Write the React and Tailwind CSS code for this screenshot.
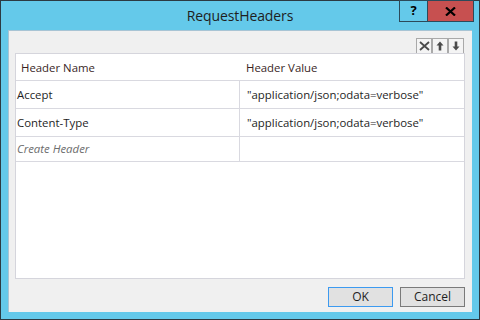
import React from "react";

const rows = [
  { name: "Accept", value: "\"application/json;odata=verbose\"" },
  { name: "Content-Type", value: "\"application/json;odata=verbose\"" },
];

const ToolButton = ({ children }) => (
  <button className="w-[16px] h-[16px] border border-[#a9a9a9] bg-[#f4f4f4] flex items-center justify-center">
    {children}
  </button>
);

export default function App() {
  return (
    <div
      className="w-[480px] h-[320px] bg-[#64c9ea] border border-[#2c3a42] flex flex-col text-[#1e1e1e]"
      style={{ fontFamily: '"Open Sans", "Noto Sans", sans-serif' }}
    >
      {/* title bar */}
      <div className="relative h-[29px] flex items-center justify-center">
        <span className="text-[14px] tracking-[-0.1px]">RequestHeaders</span>
        <div className="absolute -top-px right-[5px] flex">
          <div className="w-[29px] h-[22px] border border-[#2c4a5a] flex items-center justify-center text-[13px] font-bold text-black">
            ?
          </div>
          <div className="w-[47px] h-[22px] -ml-px border border-[#2c4a5a] bg-[#c75050] flex items-center justify-center">
            <svg width="11" height="9" viewBox="0 0 11 9">
              <path d="M1 0.5 L10 8.5 M10 0.5 L1 8.5" stroke="#000" strokeWidth="2.2" />
            </svg>
          </div>
        </div>
      </div>

      {/* client area */}
      <div className="flex-1 mx-[7px] mb-[7px] bg-[#f0f0f0] border-t border-l border-[#a8c4d4] flex flex-col pl-[6px] pr-[7px] pb-[5px]">
        <div className="flex justify-end pt-[7px] pr-px">
          <ToolButton>
            <svg width="11" height="10" viewBox="0 0 11 10">
              <path d="M1 1 L10 9 M10 1 L1 9" stroke="#4a4a4a" strokeWidth="1.8" />
            </svg>
          </ToolButton>
          <ToolButton>
            <svg width="8" height="10" viewBox="0 0 8 10">
              <path d="M4 0.5 L7.5 4.5 L5.3 4.5 L5.3 9.5 L2.7 9.5 L2.7 4.5 L0.5 4.5 Z" fill="#4a4a4a" />
            </svg>
          </ToolButton>
          <ToolButton>
            <svg width="8" height="10" viewBox="0 0 8 10">
              <path d="M4 9.5 L7.5 5.5 L5.3 5.5 L5.3 0.5 L2.7 0.5 L2.7 5.5 L0.5 5.5 Z" fill="#4a4a4a" />
            </svg>
          </ToolButton>
        </div>

        {/* table */}
        <div className="h-[226px] bg-white border border-[#d5d5dc] text-[11.4px] -mt-px">
          <div className="h-[27px] flex items-center border-b border-[#d9d9e0] pt-px">
            <div className="w-[224px] pl-[5px] text-[#3a1f1f]">Header Name</div>
            <div className="pl-[6px] text-[#3a1f1f]">Header Value</div>
          </div>
          {rows.map((r) => (
            <div key={r.name} className="h-[28px] flex border-b border-[#d9d9e0]">
              <div className="w-[224px] pl-[1px] flex items-center border-r border-[#d9d9e0]">{r.name}</div>
              <div className="pl-[7px] flex items-center">{r.value}</div>
            </div>
          ))}
          <div className="h-[25px] flex border-b border-[#d9d9e0]">
            <div className="w-[224px] pl-[1px] flex items-center border-r border-[#d9d9e0] italic text-[#6d6d6d]">
              Create Header
            </div>
            <div />
          </div>
        </div>

        {/* footer */}
        <div className="flex justify-end gap-[7px] mt-[8px]">
          <button className="w-[65px] h-[20px] bg-[#e1e1e1] border border-[#3c9af0] text-[12px] leading-none">
            OK
          </button>
          <button className="w-[65px] h-[20px] bg-[#e1e1e1] border border-[#7a7a7a] text-[12px] leading-none">
            Cancel
          </button>
        </div>
      </div>
    </div>
  );
}
